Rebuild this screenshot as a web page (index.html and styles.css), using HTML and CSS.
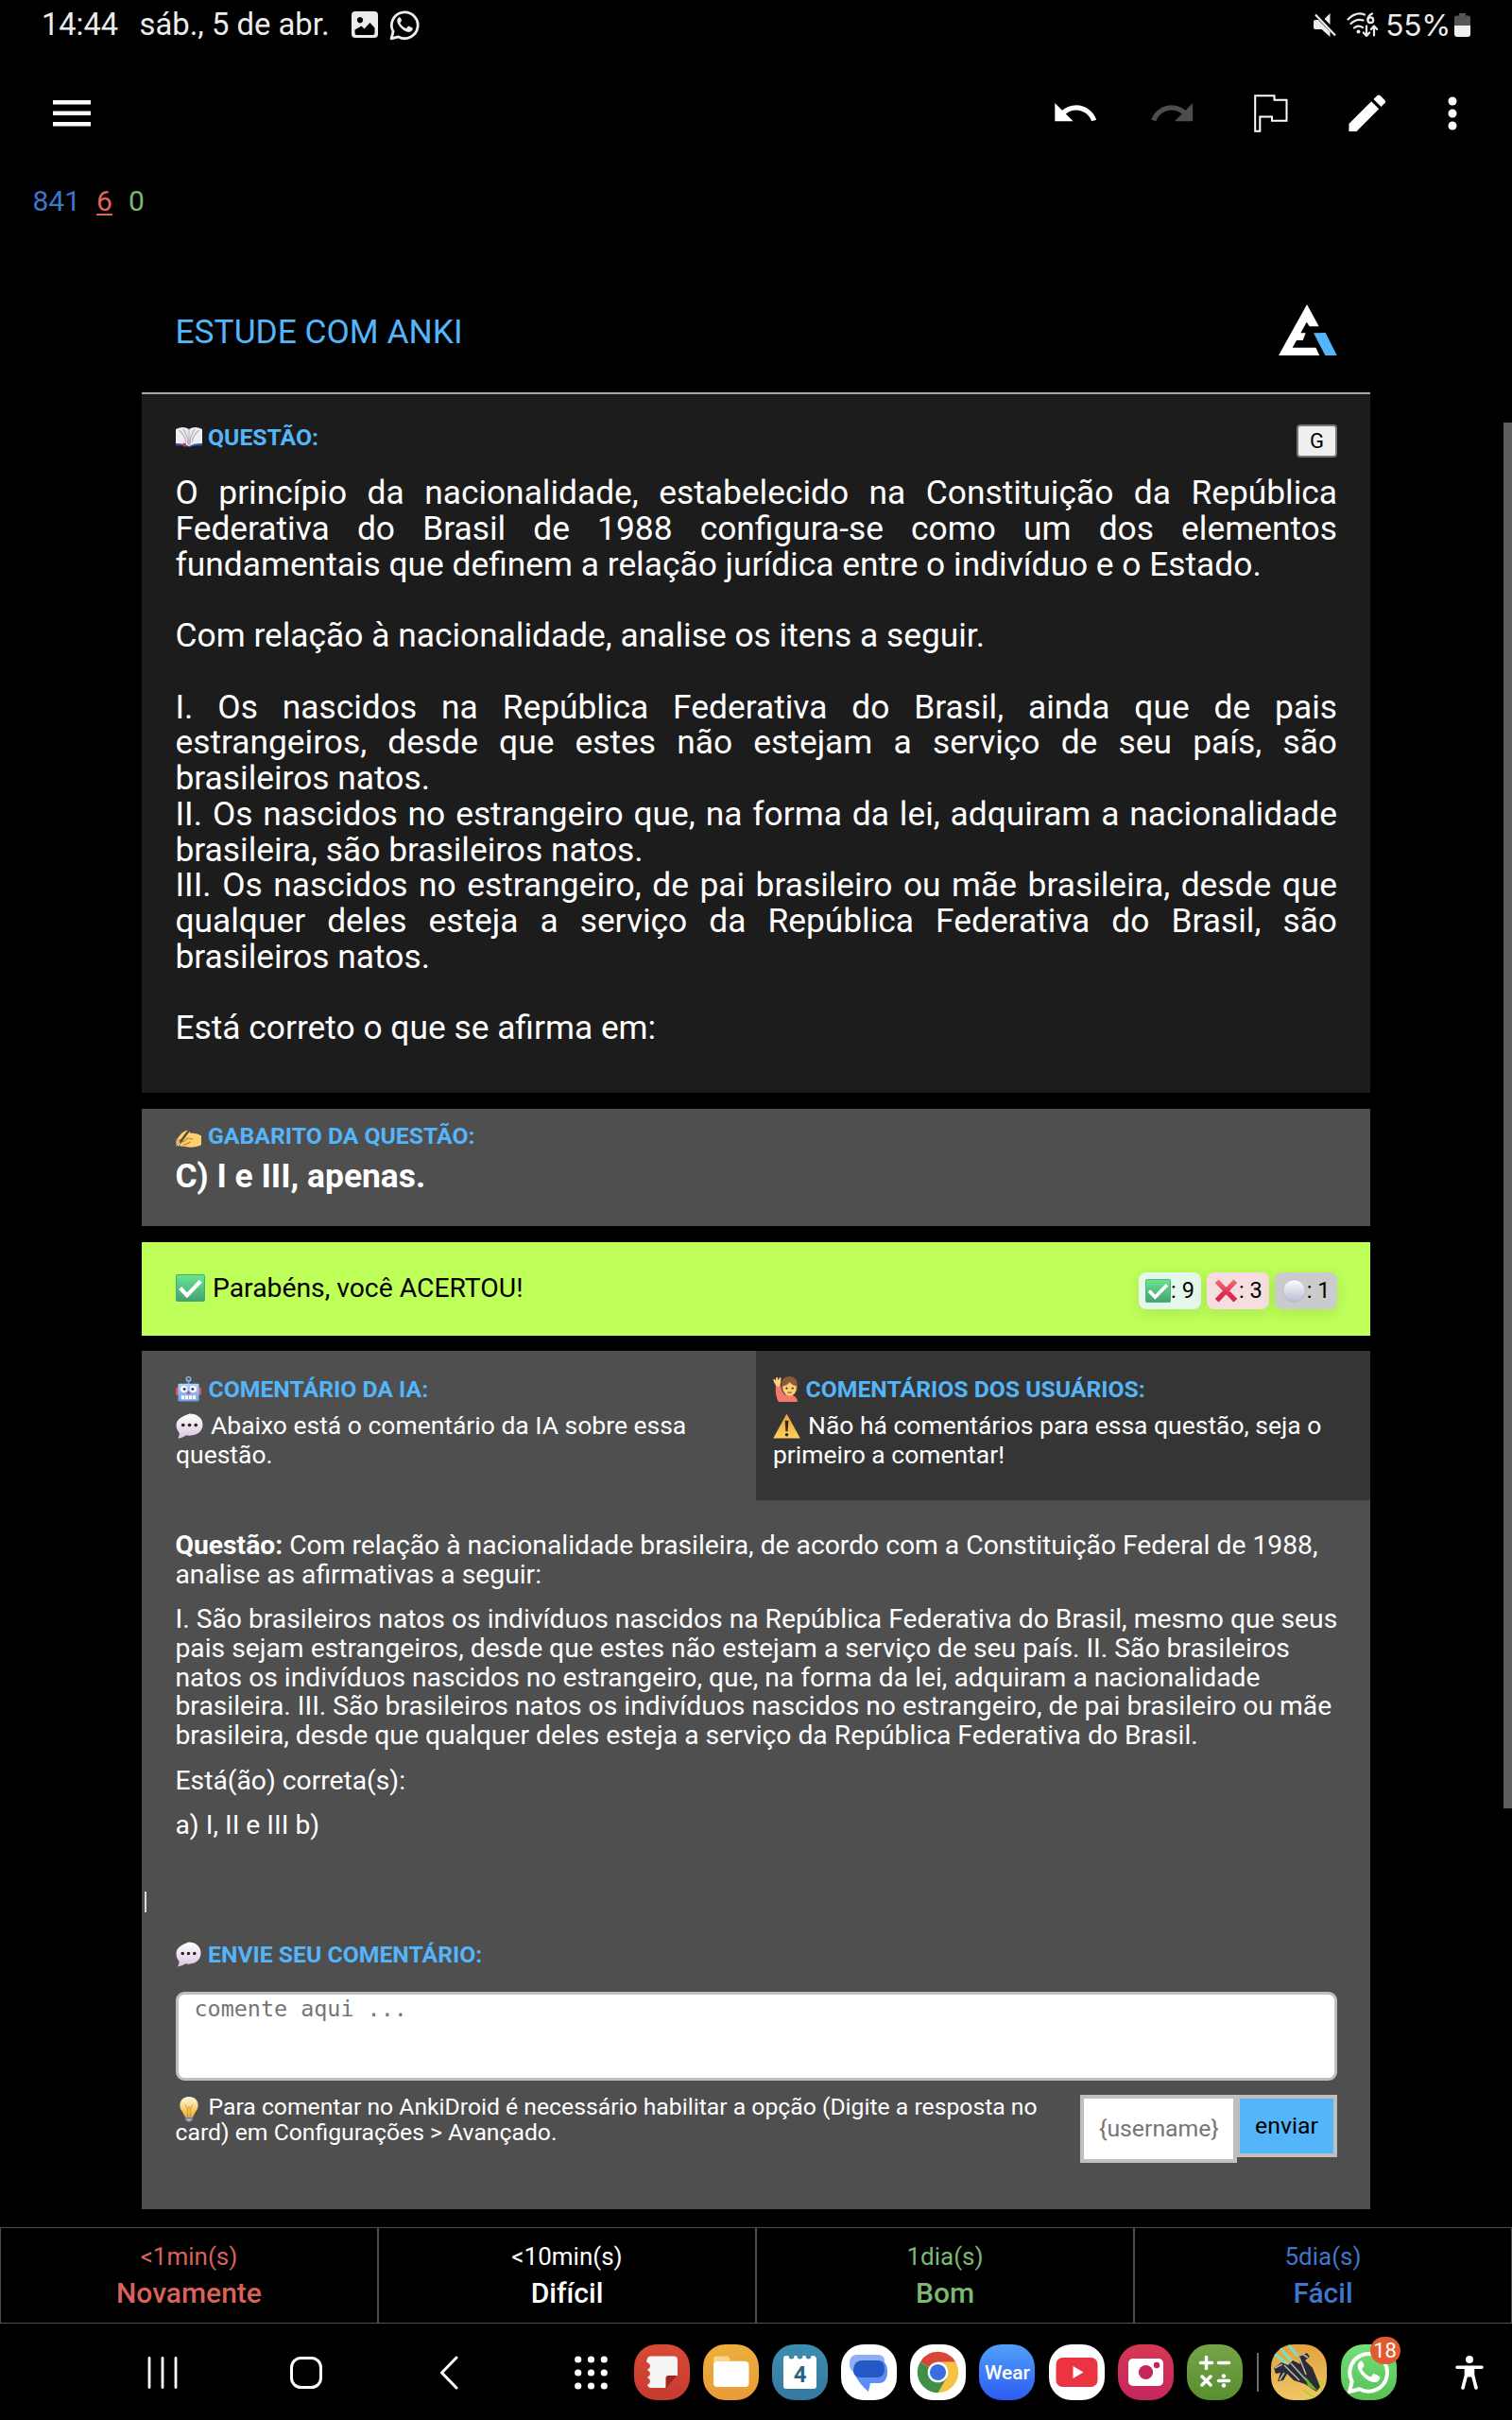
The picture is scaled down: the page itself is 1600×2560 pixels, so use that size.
FILE: index.html
```html
<!DOCTYPE html>
<html lang="pt-BR">
<head>
<meta charset="utf-8">
<title>Estude com Anki</title>
<link rel="stylesheet" href="styles.css">
</head>
<body>
<svg class="sprites" aria-hidden="true">
  <defs>
    <linearGradient id="g-green" x1="0" y1="0" x2="0" y2="1"><stop offset="0" stop-color="#6be58c"/><stop offset="1" stop-color="#43a077"/></linearGradient>
    <linearGradient id="g-red" gradientUnits="userSpaceOnUse" x1="0" y1="0" x2="0" y2="28"><stop offset="0" stop-color="#f0777c"/><stop offset="0.6" stop-color="#e0304f"/><stop offset="1" stop-color="#cf2350"/></linearGradient>
    <linearGradient id="g-white" x1="0" y1="0" x2="0" y2="1"><stop offset="0" stop-color="#fdfdff"/><stop offset="1" stop-color="#b9bccd"/></linearGradient>
    <linearGradient id="g-bubble" x1="0" y1="0" x2="0" y2="1"><stop offset="0" stop-color="#ffffff"/><stop offset="1" stop-color="#d9c6e2"/></linearGradient>
    <linearGradient id="g-warn" x1="0" y1="0" x2="0" y2="1"><stop offset="0" stop-color="#e8a13c"/><stop offset="1" stop-color="#ffd05a"/></linearGradient>
    <linearGradient id="g-robot" x1="0" y1="0" x2="0" y2="1"><stop offset="0" stop-color="#b4d6fb"/><stop offset="1" stop-color="#6f9be0"/></linearGradient>
    <linearGradient id="g-bulb" x1="0" y1="0" x2="0" y2="1"><stop offset="0" stop-color="#fffbe0"/><stop offset="1" stop-color="#f2b02e"/></linearGradient>
  </defs>
  <symbol id="e-book" viewBox="0 0 28 22" preserveAspectRatio="none">
    <path d="M0.500 5h27v15.500q-7-1-13 1.500-7-2.500-14-1.500z" fill="#3d58b5"/>
    <path d="M0 2q8-4 14 0 6-4 14 0v16q-8-1-14 3-6-4-14-3z" fill="#efedf1"/>
    <path d="M14 2v18M8 2q5 8 5 17M3 3q6 4 8 14M20 2q-5 8-5 17M25 3q-6 4-8 14" stroke="#b4b0bb" stroke-width="1.200" fill="none"/>
    <path d="M8 17l3 1v4l-1.500-1L8 22z" fill="#d8374e"/>
  </symbol>
  <symbol id="e-write" viewBox="0 0 28 28" preserveAspectRatio="none">
    <path d="M0.500 19l6-8q4-4 8-4l1.500 4q7-1 12 3v11q-8 4-17 2l-7-1-3.500 1z" fill="#ffd06b"/>
    <path d="M5 22q5-1 8-5l6 1M8 25q5-1 8-4M1 20l5-2" stroke="#cf8a2e" stroke-width="1.400" fill="none"/>
    <path d="M19 1L6 20l-4 6" stroke="#5c4a46" stroke-width="2.800" stroke-linecap="round" fill="none"/>
    <path d="M2 26l2.500-4" stroke="#eee" stroke-width="1.500"/>
  </symbol>
  <symbol id="e-check" viewBox="0 0 30 28" preserveAspectRatio="none">
    <rect x="0.500" y="0.500" width="29" height="27" rx="1.500" fill="url(#g-green)" stroke="#3fae74"/>
    <path d="M4.500 14l7 7.500L25.500 7" fill="none" stroke="#fff" stroke-width="4"/>
  </symbol>
  <symbol id="e-cross" viewBox="0 0 28 28">
    <path d="M3 2.500l22 23M25 2.500l-22 23" stroke="url(#g-red)" stroke-width="6"/>
  </symbol>
  <symbol id="e-circle" viewBox="0 0 28 28">
    <circle cx="14" cy="14" r="13.300" fill="url(#g-white)" stroke="#b5b8c6" stroke-width="1"/>
  </symbol>
  <symbol id="e-robot" viewBox="0 0 28 30" preserveAspectRatio="none">
    <rect x="0" y="13" width="3" height="9" rx="1.500" fill="#e0526c"/><rect x="25" y="13" width="3" height="9" rx="1.500" fill="#e0526c"/>
    <path d="M14 4v5" stroke="#6f9be0" stroke-width="2"/><circle cx="14" cy="3" r="2.400" fill="none" stroke="#8fb9ee" stroke-width="1.500"/>
    <rect x="2.500" y="8.500" width="23" height="21" rx="1.500" fill="url(#g-robot)"/>
    <circle cx="9" cy="15" r="3.800" fill="#fff"/><circle cx="19" cy="15" r="3.800" fill="#fff"/>
    <circle cx="9.500" cy="15" r="1.600" fill="#2d4675"/><circle cx="18.500" cy="15" r="1.600" fill="#2d4675"/>
    <path d="M14 17l2.200 3.500h-4.400z" fill="#d8374e"/>
    <rect x="6" y="22.500" width="16" height="4.500" fill="#fff"/><path d="M10 22.500v4.500M14 22.500v4.500M18 22.500v4.500" stroke="#89a7dc" stroke-width="1"/>
  </symbol>
  <symbol id="e-bubble" viewBox="0 0 28 28" preserveAspectRatio="none">
    <path d="M14 0.500c8 0 13.500 4.800 13.500 12S22 24.500 14 24.500q-2 0-3.600-.4Q7.500 27 2 27.500q2-2.500 1.600-6Q.5 18 .5 12.500.5 5.300 14 .5z" fill="url(#g-bubble)"/>
    <circle cx="7.500" cy="13" r="1.800" fill="#222"/><circle cx="14" cy="13" r="1.800" fill="#222"/><circle cx="20.500" cy="13" r="1.800" fill="#222"/>
  </symbol>
  <symbol id="e-hand" viewBox="0 0 28 30" preserveAspectRatio="none">
    <path d="M8 30q0-8 8-9 10 0 11 9z" fill="#f4796b"/>
    <path d="M3 11l5-1q1 7 5 12l-2 8H6Q2 22 3 11z" fill="#f4796b"/>
    <path d="M0 4l1.500-1L3 5 3.500 1H5l.7 3.500L7.500 1l1.300.6L8.500 7q0 4-2.500 5.500Q3 12 2 8.500z" fill="#ffd07a"/>
    <path d="M9 12q0-12 9-12 9 0 9 12l-1 6H10z" fill="#8a5a3a"/>
    <path d="M10.500 12q5-1 8-5 3 4 7 4 1 11-7.500 12-7-1-7.500-11z" fill="#ffcf73"/>
    <circle cx="15" cy="14" r="1.200" fill="#3a2a22"/><circle cx="21.500" cy="14" r="1.200" fill="#3a2a22"/>
    <path d="M16 19h4.500" stroke="#a3423c" stroke-width="1.300"/>
  </symbol>
  <symbol id="e-warn" viewBox="0 0 28 28" preserveAspectRatio="none">
    <path d="M14 0.500L27.800 27.500H.2z" fill="url(#g-warn)"/>
    <path d="M12.200 8h3.600l-.8 12h-2z" fill="#33291a"/><circle cx="14" cy="23.500" r="1.800" fill="#33291a"/>
  </symbol>
  <symbol id="e-bulb" viewBox="0 0 28 28">
    <path d="M14 0c6 0 10 4 10 9.500 0 5-4 7-5 12H9c-1-5-5-7-5-12C4 4 8 0 14 0z" fill="url(#g-bulb)"/>
    <path d="M10 9l2.500 5 1.500-3 1.500 3L18 9M12.500 14v7M15.500 14v7" stroke="#cf9a2b" stroke-width="1" fill="none"/>
    <path d="M9.500 21.500h9l-1 4q-3.500 4-7 0z" fill="#a9abb8"/><path d="M9.700 23.500h8.600" stroke="#6d6f80" stroke-width="1"/>
  </symbol>
  <symbol id="whatsapp" viewBox="0 0 34 34">
    <path d="M2.200 31.800l2-7.700A14.300 14.300 0 1 1 9.900 29.800z" fill="none" stroke="currentColor" stroke-width="2.900" stroke-linejoin="round"/>
    <path d="M12.300 9.200c-.5-1-1.700-1-2.500-.2-1.700 1.800-1.700 4.300-.2 6.900 2.200 3.900 5.200 6.700 9.300 8.300 2.600 1 5.200.2 6.200-1.700.5-1.100.6-2 .1-2.300l-3.700-1.900c-.6-.3-1-.2-1.400.4l-1.200 1.500c-.4.4-.8.4-1.400.1-2.500-1.200-4.200-2.800-5.500-5.200-.3-.5-.2-.9.2-1.300l1-1.300c.2-.4.3-.7.100-1.200z" fill="currentColor"/>
  </symbol>
</svg>

<header class="statusbar">
  <span class="clock">14:44</span>
  <span class="date">sáb., 5 de abr.</span>
  <svg class="st-image" viewBox="0 0 28 28"><path fill="#ececec" fill-rule="evenodd" d="M4 0h20a4 4 0 0 1 4 4v20a4 4 0 0 1-4 4H4a4 4 0 0 1-4-4V4a4 4 0 0 1 4-4zM9 6a3.200 3.200 0 1 0 .01 0zM3.500 19.500v3.500q0 2 2 2h17q2 0 2-2v-5.500l-5-5.500-6 6.500-3-3z"/></svg>
  <svg class="st-wa"><use href="#whatsapp"/></svg>
  <span class="spacer"></span>
  <svg class="st-mute" viewBox="0 0 24 25"><path fill="#ececec" d="M0 9q0-2 2-2h3L17.500 19.500V25L8.500 17H2q-2 0-2-2zM17.500 0v12L11.500 6z"/><path d="M2 1.500l21 22" stroke="#ececec" stroke-width="2.200"/></svg>
  <svg class="st-wifi" viewBox="0 0 34 27"><g fill="none" stroke="#ececec" stroke-width="2.200" stroke-linecap="round" stroke-linejoin="round"><path d="M1.500 7.500Q10-1 19 2.500M4.500 12q6-6 13-3.500M8 16.500q4-3.500 9-.5M27 1.500q-4.500 2-4.500 6"/><circle cx="25.300" cy="8.300" r="2.900"/><path d="M21 14.500v10M17.800 21.500l3.200 3.500 3.200-3.500M29 24.500v-10M25.800 18l3.200-3.500 3.200 3.500"/></g><circle cx="12.500" cy="20.500" r="2" fill="#ececec"/></svg>
  <span class="battery-level">55%</span>
  <svg class="st-battery" viewBox="0 0 17 25"><path d="M5 0h7v2.500h2.500Q17 2.500 17 5v8.500H0V5q0-2.500 2.500-2.500H5z" fill="#555"/><path d="M0 13h17v9q0 3-3 3H3q-3 0-3-3z" fill="#efefef"/></svg>
</header>

<nav class="toolbar">
  <svg class="tb-menu" viewBox="0 0 40 28"><path d="M0 2.300h40M0 13.800h40M0 25.300h40" stroke="#fff" stroke-width="4.400"/></svg>
  <span class="spacer"></span>
  <svg class="tb-icon tb-undo" viewBox="0 0 24 24"><path fill="#fff" d="M12.500 8c-2.650 0-5.050.99-6.900 2.600L2 7v9h9l-3.620-3.620c1.390-1.160 3.160-1.880 5.120-1.880 3.540 0 6.550 2.310 7.600 5.500l2.370-.78C21.080 11.030 17.150 8 12.500 8z"/></svg>
  <svg class="tb-icon tb-redo" viewBox="0 0 24 24"><path fill="#4d4d4d" d="M18.400 10.600C16.550 8.990 14.150 8 11.500 8c-4.650 0-8.580 3.030-9.960 7.220L3.900 16c1.050-3.190 4.050-5.500 7.600-5.500 1.950 0 3.730.72 5.120 1.880L13 16h9V7l-3.600 3.600z"/></svg>
  <svg class="tb-flag" viewBox="0 0 36 40"><path d="M1.200 1.200h20.300v4.600h13v22H19V23.400H6.300v15.400H1.200z" fill="none" stroke="#fff" stroke-width="2"/></svg>
  <svg class="tb-icon tb-edit" viewBox="0 0 24 24"><path fill="#fff" d="M3 17.250V21h3.750L17.810 9.940l-3.750-3.750L3 17.250zM20.710 7.040c.39-.39.39-1.020 0-1.410l-2.340-2.340c-.39-.39-1.020-.39-1.410 0l-1.830 1.830 3.750 3.750 1.830-1.830z"/></svg>
  <svg class="tb-more" viewBox="0 0 10 36"><g fill="#fff"><circle cx="5" cy="5" r="4.500"/><circle cx="5" cy="18" r="4.500"/><circle cx="5" cy="31" r="4.500"/></g></svg>
</nav>

<div class="counts"><span class="c-new">841</span><span class="c-learn">6</span><span class="c-due">0</span></div>

<main class="card">
  <header class="card-head">
    <h1>ESTUDE COM ANKI</h1>
    <svg class="logo" viewBox="759 66 185 162"><path fill="#fff" d="M849 66l38 70h-30l-9-14-19 35h16l-9 23h-20l-13 23h74l12 25H759z"/><path fill="#54b5f9" d="M870 157l38-1 36 72h-37z"/></svg>
  </header>

  <section class="question">
    <div class="question-top">
      <h2 class="label"><svg class="emoji emoji-book"><use href="#e-book"/></svg>QUESTÃO:</h2>
      <button class="g-button">G</button>
    </div>
    <p class="question-text">O princípio da nacionalidade, estabelecido na Constituição da República Federativa do Brasil de 1988 configura-se como um dos elementos fundamentais que definem a relação jurídica entre o indivíduo e o Estado.<br><br>Com relação à nacionalidade, analise os itens a seguir.<br><br>I. Os nascidos na República Federativa do Brasil, ainda que de pais estrangeiros, desde que estes não estejam a serviço de seu país, são brasileiros natos.<br>II. Os nascidos no estrangeiro que, na forma da lei, adquiram a nacionalidade brasileira, são brasileiros natos.<br>III. Os nascidos no estrangeiro, de pai brasileiro ou mãe brasileira, desde que qualquer deles esteja a serviço da República Federativa do Brasil, são brasileiros natos.<br><br>Está correto o que se afirma em:</p>
  </section>

  <section class="answer-key">
    <h2 class="label"><svg class="emoji"><use href="#e-write"/></svg>GABARITO DA QUESTÃO:</h2>
    <p class="key-text">C) I e III, apenas.</p>
  </section>

  <section class="result">
    <p class="result-text"><svg class="emoji emoji-lg"><use href="#e-check"/></svg>Parabéns, você ACERTOU!</p>
    <div class="badges">
      <span class="badge badge-ok"><svg class="emoji-sm"><use href="#e-check"/></svg>: 9</span>
      <span class="badge badge-bad"><svg class="emoji-sm"><use href="#e-cross"/></svg>: 3</span>
      <span class="badge badge-none"><svg class="emoji-sm"><use href="#e-circle"/></svg>: 1</span>
    </div>
  </section>

  <section class="comments">
    <div class="tabs">
      <div class="tab tab-ai">
        <h2 class="label"><svg class="emoji"><use href="#e-robot"/></svg>COMENTÁRIO DA IA:</h2>
        <p><svg class="emoji emoji-p"><use href="#e-bubble"/></svg>Abaixo está o comentário da IA sobre essa questão.</p>
      </div>
      <div class="tab tab-users">
        <h2 class="label"><svg class="emoji"><use href="#e-hand"/></svg>COMENTÁRIOS DOS USUÁRIOS:</h2>
        <p><svg class="emoji emoji-p"><use href="#e-warn"/></svg>Não há comentários para essa questão, seja o primeiro a comentar!</p>
      </div>
    </div>
    <div class="comment-body">
      <p><strong>Questão:</strong> Com relação à nacionalidade brasileira, de acordo com a Constituição Federal de 1988, analise as afirmativas a seguir:</p>
      <p>I. São brasileiros natos os indivíduos nascidos na República Federativa do Brasil, mesmo que seus pais sejam estrangeiros, desde que estes não estejam a serviço de seu país. II. São brasileiros natos os indivíduos nascidos no estrangeiro, que, na forma da lei, adquiram a nacionalidade brasileira. III. São brasileiros natos os indivíduos nascidos no estrangeiro, de pai brasileiro ou mãe brasileira, desde que qualquer deles esteja a serviço da República Federativa do Brasil.</p>
      <p>Está(ão) correta(s):</p>
      <p>a) I, II e III b)</p>
    </div>
    <div class="caret"></div>
    <div class="send">
      <h2 class="label"><svg class="emoji"><use href="#e-bubble"/></svg>ENVIE SEU COMENTÁRIO:</h2>
      <textarea class="comment-input" placeholder="comente aqui ..."></textarea>
      <div class="send-row">
        <p class="hint"><svg class="emoji"><use href="#e-bulb"/></svg>Para comentar no AnkiDroid é necessário habilitar a opção (Digite a resposta no card) em Configurações &gt; Avançado.</p>
        <input class="username" type="text" placeholder="{username}">
        <button class="send-button">enviar</button>
      </div>
    </div>
  </section>
</main>

<div class="scrollbar"></div>

<div class="ease">
  <button class="ease-button again"><span>&lt;1min(s)</span><b>Novamente</b></button>
  <button class="ease-button hard"><span>&lt;10min(s)</span><b>Difícil</b></button>
  <button class="ease-button good"><span>1dia(s)</span><b>Bom</b></button>
  <button class="ease-button easy"><span>5dia(s)</span><b>Fácil</b></button>
</div>

<footer class="navbar">
  <svg class="nav-recents" viewBox="0 0 32 34"><path d="M2 1.500v31M16 1.500v31M30 1.500v31" stroke="#fff" stroke-width="2.800" stroke-linecap="round"/></svg>
  <svg class="nav-home" viewBox="0 0 34 34"><rect x="1.500" y="1.500" width="31" height="31" rx="10" fill="none" stroke="#fff" stroke-width="3"/></svg>
  <svg class="nav-back" viewBox="0 0 20 36"><path d="M18 2L2.500 18 18 34" fill="none" stroke="#fff" stroke-width="3" stroke-linecap="round" stroke-linejoin="round"/></svg>
  <svg class="nav-grid" viewBox="0 0 35 36"><g fill="#fff"><circle cx="3.700" cy="4" r="3.600"/><circle cx="17.500" cy="4" r="3.600"/><circle cx="31.300" cy="4" r="3.600"/><circle cx="3.700" cy="18" r="3.600"/><circle cx="17.500" cy="18" r="3.600"/><circle cx="31.300" cy="18" r="3.600"/><circle cx="3.700" cy="32" r="3.600"/><circle cx="17.500" cy="32" r="3.600"/><circle cx="31.300" cy="32" r="3.600"/></g></svg>

  <div class="dock">
    <div class="app app-notes"><svg viewBox="0 0 59 59"><path fill="#f5f5f5" d="M17 12.500h25q4 0 4 4V33L33 46H18q-3 0-4-3 3-1.500 3-4t-3-4q3-1.500 3-4t-3-4q3-1.500 3-4t-4-4.500q1-6 4-6z"/><path fill="#9f241d" d="M33.500 46.500V36q0-3 3-3H46z"/></svg></div>
    <div class="app app-files"><svg viewBox="0 0 59 59"><path fill="#f9d58e" d="M11 20v-4q0-3.500 3.500-3.500H25q3 0 3.500 5H45v9H11z"/><rect x="11" y="18" width="37.500" height="27" rx="4" fill="#fff"/></svg></div>
    <div class="app app-calendar"><svg viewBox="0 0 59 59"><path fill="#fff" d="M12 15q0-3 3-3h2.500q0 3.500 3 3.500t3-3.500h3q0 3.500 3 3.500t3-3.500h3q0 3.500 3 3.500t3-3.500H43q4 0 4 4v28q0 3-3 3H15q-3 0-3-3z"/></svg><span>4</span></div>
    <div class="app app-messages"><svg viewBox="0 0 59 59"><path fill="#8daef5" d="M17 11h22q7 0 7 7l-4 13H20Q9 31 9 20q0-9 8-9z"/><path fill="#5f8bf4" d="M22 17h18q9 0 9 12t-9 12H31q-1 5-2 9-10-8-16-21z"/><path fill="#2459c6" d="M22 17h16q8 0 8 9t-8 9H21q-8 0-8-8 1-10 9-10z"/></svg></div>
    <div class="app app-chrome"><svg viewBox="0 0 59 59"><path fill="#d84636" d="M29.500 29.500L10.700 18.700A21.700 21.700 0 0 1 48.300 18.700H29.500z"/><path fill="#f6c244" d="M29.500 29.500V18.700h18.800A21.700 21.700 0 0 1 29.500 51.200z"/><path fill="#3f8f49" d="M29.500 29.500l9.400 5.400-9.400 16.300A21.700 21.700 0 0 1 10.700 18.700z"/><circle cx="29.500" cy="29.500" r="10.800" fill="#fff"/><circle cx="29.500" cy="29.500" r="8.600" fill="#376fe0"/></svg></div>
    <div class="app app-wear"><span>Wear</span></div>
    <div class="app app-youtube"><svg viewBox="0 0 59 59"><rect x="7.500" y="14" width="44" height="31" rx="7" fill="#ec3342"/><path fill="#fff" d="M25.500 23l11 6.500-11 6.500z"/></svg></div>
    <div class="app app-camera"><svg viewBox="0 0 59 59"><rect x="11" y="15" width="37" height="29" rx="5" fill="#fff"/><circle cx="29.500" cy="29.500" r="7.600" fill="#c4265a"/><circle cx="41" cy="22" r="3.200" fill="#c4265a"/></svg></div>
    <div class="app app-calc"><svg viewBox="0 0 59 59"><g stroke="#fff" stroke-width="3.500" stroke-linecap="round"><path d="M14.500 19.500h12M20.500 13.500v12M33.500 19.500h11M16 34l9 9M25 34l-9 9M33.500 38.500h11"/></g><circle cx="39" cy="33.500" r="2.200" fill="#fff"/><circle cx="39" cy="43.500" r="2.200" fill="#fff"/></svg></div>
    <i class="dock-divider"></i>
    <div class="app app-game"><svg viewBox="0 0 59 59"><path d="M8 2l14 16M18 0l10 12M4 10l14 12" stroke="#7fe0c0" stroke-width="3"/><path d="M42 40l14 10M34 48l14 10M48 38l10 4" stroke="#a9d62f" stroke-width="2"/><path fill="#2b2c31" d="M3 25l8-6 7 3 5-5 8 4-1-8 8-4 3 4-5 4 8 8 8 20-4 5-12-8-12-4-7-7-4 7-6 1 3-9-5 1z"/><path d="M4 25l8-4M14 22l16 16M21 20l20 22M30 14l7 18M9 38l5-8M33 10l6 4" stroke="#b4b5ba" stroke-width="1.600" fill="none"/><path d="M36 34l14 16-11-6z" fill="#6fae2b"/></svg></div>
    <div class="app app-whatsapp"><svg class="wa-mark"><use href="#whatsapp"/></svg><span class="notif">18</span></div>
  </div>
  <svg class="nav-access" viewBox="0 0 30 36"><circle cx="15" cy="4" r="4" fill="#fff"/><path d="M2 12.200h26M11.500 12v8.500L8 34M18.500 12v8.500L22 34" stroke="#fff" stroke-width="3.600" fill="none" stroke-linecap="round"/><path d="M10 12h10v10.500H10z" fill="#fff"/></svg>
</footer>
</body>
</html>
```
FILE: styles.css
```css
* { box-sizing: border-box; }

body {
  margin: 0;
  width: 1600px;
  height: 2560px;
  display: flex;
  flex-direction: column;
  background: #000;
  color: #fff;
  font-family: Roboto, "Liberation Sans", sans-serif;
  overflow: hidden;
  position: relative;
}

h1, h2, p { margin: 0; }
svg { display: block; flex: none; }
button, input, textarea { font-family: inherit; margin: 0; border-radius: 0; outline: none; }
.sprites { position: absolute; width: 0; height: 0; }
.spacer { flex: 1; }

/* System status bar */
.statusbar {
  height: 52px;
  flex: none;
  display: flex;
  align-items: center;
  padding: 0 44px 0 44px;
  color: #ececec;
  font-size: 32.5px;
}
.clock { width: 103.5px; }
.date { width: 224.5px; font-size: 32.8px; white-space: nowrap; }
.st-image { width: 28px; height: 28px; }
.st-wa { width: 33px; height: 33px; margin-left: 12px; color: #ececec; }
.st-mute { width: 24px; height: 25px; margin-right: 11px; }
.st-wifi { width: 34px; height: 27px; margin-right: 7px; }
.battery-level { font-family: Inter, Roboto, sans-serif; font-size: 31.7px; margin-right: 4px; letter-spacing: -0.3px; }
.st-battery { width: 17px; height: 25px; }

/* Reviewer toolbar */
.toolbar {
  height: 135px;
  flex: none;
  display: flex;
  align-items: center;
  padding: 0 58.5px 0 56px;
}
.tb-menu { width: 40px; height: 28px; }
.tb-icon { width: 51.5px; height: 51.5px; }
.tb-redo { margin-left: 51.5px; }
.tb-flag { width: 36px; height: 40px; margin-left: 61px; }
.tb-edit { margin-left: 57.5px; }
.tb-more { width: 10px; height: 36px; margin-left: 59.5px; }

.counts {
  height: 51px;
  flex: none;
  display: flex;
  gap: 17px;
  padding-left: 34.5px;
  font-size: 30px;
  line-height: 51px;
}
.c-new { color: #3f76ca; }
.c-learn { color: #e0645c; text-decoration: underline; text-underline-offset: 3px; text-decoration-thickness: 2px; }
.c-due { color: #7bb873; }

/* Card */
.card {
  width: 1300px;
  flex: none;
  margin: 50px auto 0;
}
.card-head {
  height: 129px;
  display: flex;
  align-items: center;
  justify-content: space-between;
  padding: 0 35px 0 35.5px;
  border-bottom: 2px solid #a9a9a9;
}
.card-head h1 {
  font-weight: 400;
  font-size: 35.33px;
  margin-top: -1px;
  color: #54b5f9;
}
.logo { width: 61.7px; height: 54px; margin-bottom: 5px; }

.label {
  display: flex;
  align-items: center;
  gap: 7.500px;
  height: 28px;
  font-size: 24.75px;
  font-weight: 700;
  color: #54b5f9;
  white-space: nowrap;
}
.emoji { width: 27px; height: 25px; }
.emoji-book { width: 28px; height: 21px; }

.question {
  height: 739px;
  padding: 31.5px 35px 0 35.5px;
  background: #1c1c1c;
}
.question-top { display: flex; justify-content: space-between; height: 35px; }
.question-top .label { gap: 6.500px; }
.g-button {
  width: 43px;
  height: 35px;
  padding: 0;
  border: 2px solid #767676;
  border-radius: 4px;
  background: #efefef;
  color: #000;
  font-size: 22px;
}
.question-text {
  margin-top: 19.7px;
  font-size: 35.33px;
  line-height: 37.74px;
  text-align: justify;
}

.answer-key {
  height: 123.7px;
  margin-top: 17px;
  padding: 14.4px 35px 0 35.5px;
  background: #4f4f4f;
}
.key-text {
  margin-top: 10px;
  font-size: 35.4px;
  font-weight: 700;
  line-height: 38px;
}

.result {
  height: 99.6px;
  margin-top: 17px;
  padding: 0 35px 0 36px;
  display: flex;
  align-items: center;
  justify-content: space-between;
  background: #beff5a;
  color: #000;
}
.result-text { display: flex; align-items: center; gap: 8px; font-size: 28.3px; margin-top: -1px; }
.emoji-lg { width: 31px; height: 29px; }
.badges { display: flex; gap: 5.500px; margin-top: 4px; }
.badge {
  width: 66.3px;
  height: 39.5px;
  display: flex;
  align-items: center;
  padding-left: 7px;
  border-radius: 8px;
  font-size: 23.5px;
  box-shadow: 0 4px 16px rgba(0, 0, 0, 0.1);
}
.emoji-sm { width: 27px; height: 25px; }
.badge-ok { background: #e3f7ea; }
.badge-bad { background: #f5dde0; }
.badge-none { background: #cbcbcb; }

/* Comment panel */
.comments {
  height: 907.7px;
  margin-top: 16px;
  background: #4f4f4f;
}
.tabs { display: grid; grid-template-columns: 1fr 1fr; height: 158px; }
.tab { padding-top: 26.5px; }
.tab-ai { padding-left: 36px; padding-right: 18px; }
.tab-users { padding-left: 18px; padding-right: 35px; background: #353535; }
.tab p { margin-top: 9px; font-size: 26.48px; line-height: 30.8px; }
.tab .emoji, .send .label .emoji { height: 27px; }
.tab .emoji-p { display: inline-block; width: 29px; height: 27px; margin-right: 8px; vertical-align: -5px; }

.comment-body {
  padding: 32.6px 30px 0 35.5px;
  font-size: 28.25px;
  line-height: 30.75px;
}
.comment-body p + p { margin-top: 16.7px; }

.caret { width: 2px; height: 22px; margin: 54px 0 0 3px; background: #dcdcdc; }

.send { padding: 31px 35px 0 35.5px; }
.comment-input {
  display: block;
  width: 100%;
  height: 94px;
  margin-top: 25px;
  padding: 2px 17px;
  border: 3px solid #bfbfbf;
  border-radius: 9px;
  background: #fff;
  font-family: "DejaVu Sans Mono", "Liberation Mono", monospace;
  font-size: 23.4px;
  line-height: 27px;
  resize: none;
}
.comment-input::placeholder, .username::placeholder { color: #757575; opacity: 1; }
.send-row { display: flex; align-items: flex-start; margin-top: 15px; }
.hint { flex: 1; font-size: 24.72px; line-height: 27px; margin-top: -1px; padding-right: 30px; }
.hint .emoji { display: inline-block; width: 28px; height: 27px; margin: -4px 7px -4px 0; vertical-align: -4px; }
.username {
  width: 166px;
  height: 72px;
  padding: 0 16px;
  border: 4px solid #bfbfbf;
  background: #fff;
  font-size: 24.8px;
}
.send-button {
  width: 106px;
  height: 66px;
  padding: 0;
  border: 4px solid #bfbfbf;
  border-left-width: 3px;
  background: #54b5f9;
  color: #000;
  font-size: 24.8px;
}

.scrollbar {
  position: absolute;
  top: 447px;
  right: 0;
  width: 9px;
  height: 1466px;
  background: #5e5e5e;
}

/* Ease buttons */
.ease { display: grid; grid-template-columns: repeat(4, 1fr); margin-top: 19px; flex: none; }
.ease-button {
  height: 102px;
  padding: 0;
  border: 1px solid #4c4c4c;
  background: #000;
  display: flex;
  flex-direction: column;
  align-items: center;
  justify-content: center;
}
.ease-button span { font-size: 26px; line-height: 38px; }
.ease-button b { font-size: 30px; font-weight: 500; line-height: 39px; }
.again { color: #d9625a; }
.hard { color: #fff; }
.good { color: #7bb873; }
.easy { color: #3f76ca; }

/* System navigation bar */
.navbar { flex: 1; display: flex; align-items: center; padding: 2px 30px 0 156px; }
.nav-recents { width: 32px; height: 34px; }
.nav-home { width: 34px; height: 34px; margin-left: 119px; }
.nav-back { width: 20px; height: 36px; margin-left: 124px; }
.nav-grid { width: 35px; height: 36px; margin-left: 123px; }
.dock { display: flex; align-items: center; gap: 14.1px; margin-left: 28px; }
.app {
  width: 59px;
  height: 59px;
  border-radius: 24px;
  display: flex;
  align-items: center;
  justify-content: center;
  position: relative;
  flex: none;
}
.app > svg { width: 59px; height: 59px; border-radius: 24px; }
.app-notes { background: linear-gradient(#d94b35, #c63a30); }
.app-files { background: linear-gradient(#edaf3c, #ea9a36); }
.app-calendar { background: linear-gradient(#3c8fae, #3579a0); }
.app-calendar span { position: absolute; left: 0; right: 0; top: 18px; text-align: center; font-size: 24px; line-height: 28px; font-weight: 700; color: #2a6580; }
.app-messages, .app-chrome, .app-youtube { background: #fff; }
.app-wear { background: linear-gradient(#4fa0f8, #2c5cf4); }
.app-wear span { font-size: 21px; font-weight: 500; }
.app-camera { background: linear-gradient(#d63852, #c42660); }
.app-calc { background: linear-gradient(#76a446, #578f30); }
.dock-divider { width: 2px; height: 41px; margin: 0 -0.500px 0 1px; background: #6a6a6a; }
.app-game { background: linear-gradient(#e2a23f, #efc665); }
.app-whatsapp { background: linear-gradient(#74e078, #58bf55); }
.app-whatsapp .wa-mark { width: 41px; height: 41px; color: #fff; border-radius: 0; }
.wa-mark { transform: scale(1.15); }
.notif {
  position: absolute;
  left: 31px;
  top: -8px;
  width: 32px;
  height: 29px;
  border-radius: 15px;
  background: #e35a32;
  font-size: 22px;
  line-height: 29px;
  text-align: center;
}
.nav-access { width: 30px; height: 36px; margin-left: auto; }
```
